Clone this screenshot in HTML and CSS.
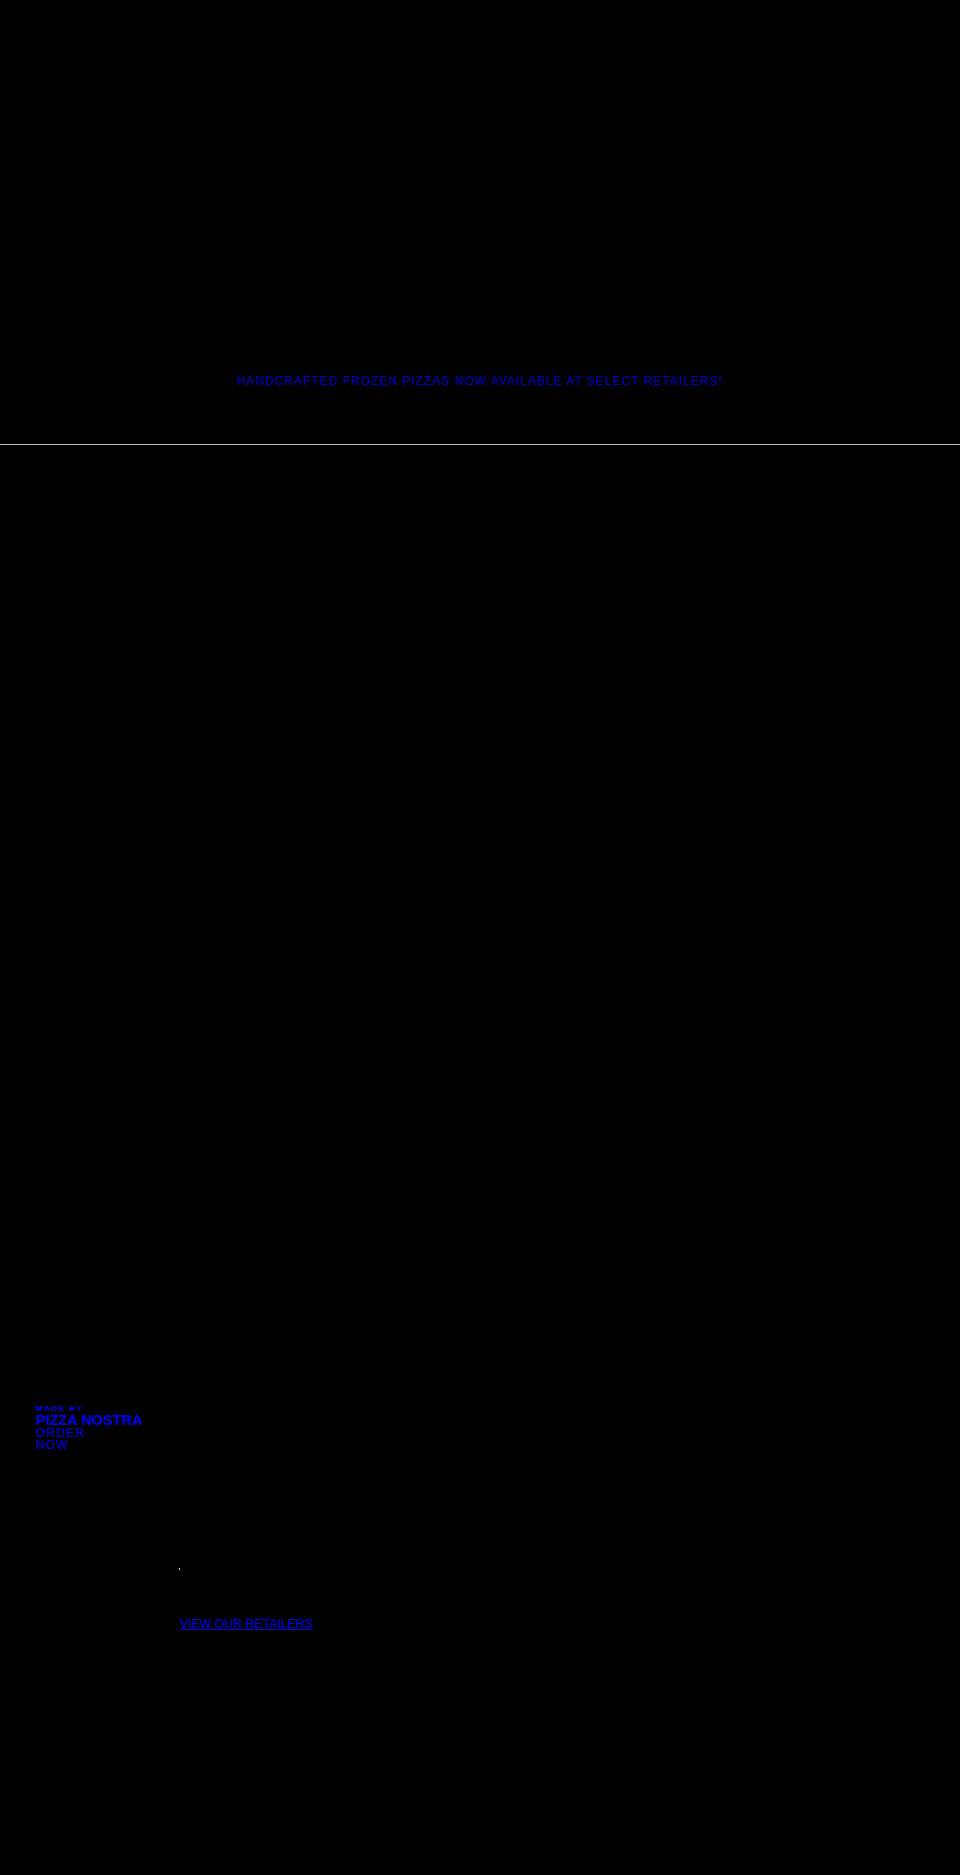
FILE: index.html
```html
<!DOCTYPE html>
<html lang="en">
<head>
<meta charset="utf-8">
<title>Pizza Nostra</title>
<link rel="stylesheet" href="styles.css">
</head>
<body>
<header class="announce">
  <a class="announce-link" href="#">Handcrafted frozen pizzas now available at select retailers!</a>
</header>
<main class="hero">
</main>
<section class="brand">
  <p class="brand-kicker">Made by</p>
  <p class="brand-name">Pizza Nostra</p>
  <a class="brand-order" href="#">Order<br>Now</a>
</section>
<section class="retail">
  <span class="retail-dot"></span>
  <a class="retail-link" href="#">View our retailers</a>
</section>
<footer class="foot"></footer>
</body>
</html>
```
FILE: styles.css
```css
html, body {
  margin: 0;
  padding: 0;
  background: #000;
  font-family: "Liberation Sans", Arial, sans-serif;
}
a { color: #0000ee; }
.announce {
  height: 445px;
  box-sizing: border-box;
  padding-top: 371px;
  text-align: center;
  border-bottom: 1px solid #bdbdbd;
}
.announce-link {
  font-size: 12px;
  letter-spacing: 1px;
  text-transform: uppercase;
  text-decoration: none;
  color: #0000cc;
}
.hero {
  height: 955px;
}
.brand {
  padding-left: 36px;
  height: 168px;
}
.brand p { margin: 0; }
.brand-kicker {
  color: #0000ee;
  font-size: 8px;
  font-weight: bold;
  letter-spacing: 1.5px;
  text-transform: uppercase;
  line-height: 10px;
  padding-top: 4px;
}
.brand-name {
  color: #0000ee;
  font-size: 14.5px;
  font-weight: bold;
  text-transform: uppercase;
  line-height: 13px;
}
.brand-order {
  display: block;
  color: #0000ee;
  font-size: 12px;
  letter-spacing: 1.2px;
  text-transform: uppercase;
  text-decoration: none;
  line-height: 12px;
}
.retail {
  padding-left: 179px;
  display: flex;
  flex-direction: column;
  align-items: flex-start;
}
.retail-dot {
  width: 1px;
  height: 2px;
  background: #ddd;
  margin-bottom: 47px;
}
.retail-link {
  font-size: 12.3px;
  letter-spacing: 0;
  text-transform: uppercase;
  color: #0000ee;
  margin-left: 1px;
}
.foot {
  height: 200px;
}
```
